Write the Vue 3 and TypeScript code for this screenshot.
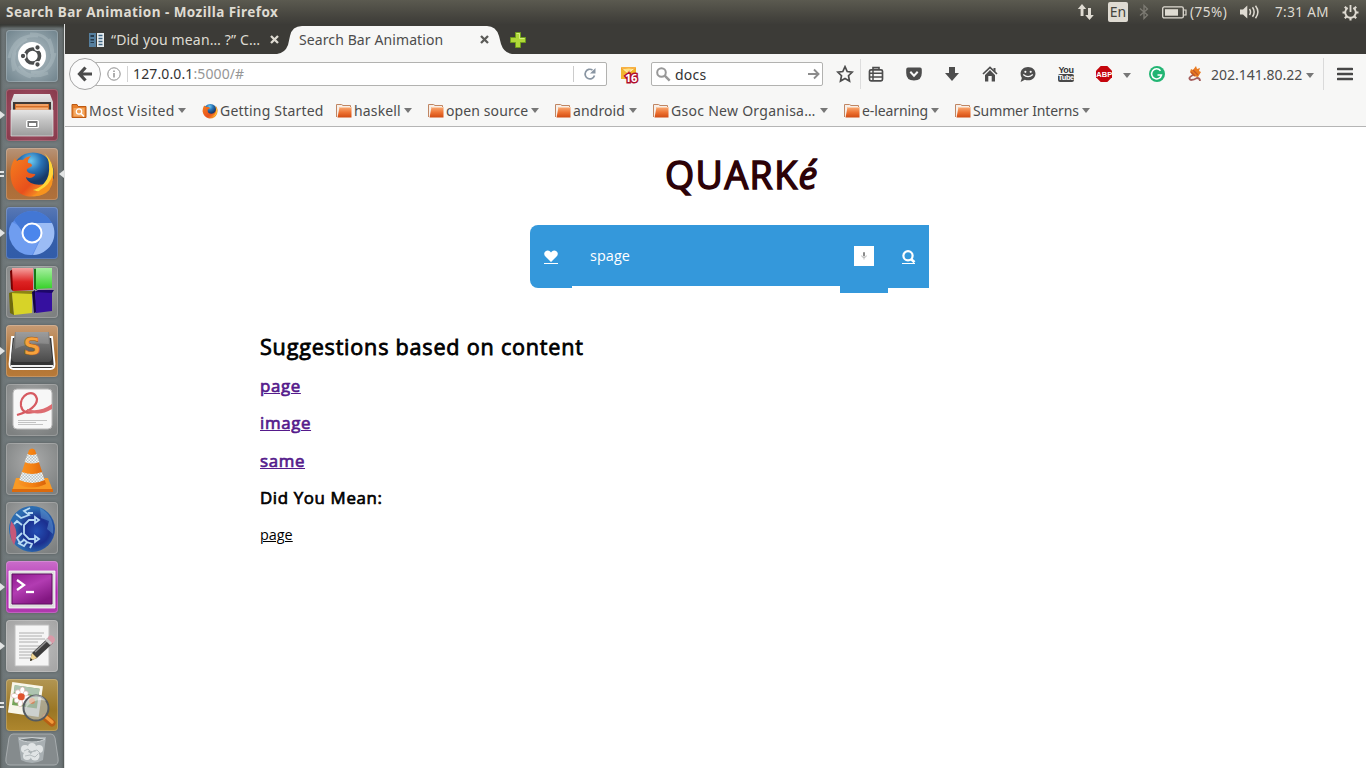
<script setup lang="ts">
interface Bookmark {
  label: string
  icon: 'visited' | 'firefox' | 'folder'
  menu: boolean
  spacing: string
}

const bookmarks: Bookmark[] = [
  { label: 'Most Visited', icon: 'visited', menu: true, spacing: '0.45px' },
  { label: 'Getting Started', icon: 'firefox', menu: false, spacing: '0.2px' },
  { label: 'haskell', icon: 'folder', menu: true, spacing: '0.15px' },
  { label: 'open source', icon: 'folder', menu: true, spacing: '0.1px' },
  { label: 'android', icon: 'folder', menu: true, spacing: '0.1px' },
  { label: 'Gsoc New Organisa…', icon: 'folder', menu: true, spacing: '0.28px' },
  { label: 'e-learning', icon: 'folder', menu: true, spacing: '-0.1px' },
  { label: 'Summer Interns', icon: 'folder', menu: true, spacing: '-0.1px' },
]

const suggestions: string[] = ['page', 'image', 'same']
</script>

<template>
  <div class="screen">
    <header class="panel">
      <span class="panel-title">Search Bar Animation - Mozilla Firefox</span>
      <svg class="net" width="18" height="18" viewBox="0 0 18 18"><path d="M5 1 .8 6H3.600v7h2.900V6H9.200zM12.500 17l4.300-5H14V5h-3v7H8.200z" fill="#dfdbd2" /></svg>
      <span class="lang">En</span>
      <svg class="bt" width="10" height="16" viewBox="0 0 10 16"><path d="M1 4.500 8.500 11 5 14.500V1.500L8.500 5 1 11.500" fill="none" stroke="#7d7b73" stroke-width="1.300" /></svg>
      <svg class="bat" width="25" height="13" viewBox="0 0 25 13"><rect x=".7" y=".9" width="20.600" height="11" rx="1.500" fill="none" stroke="#dfdbd2" stroke-width="1.300" /><rect x="3" y="3.200" width="13" height="6.500" fill="#dfdbd2" /><path d="M22 4h2v5h-2" fill="none" stroke="#dfdbd2" stroke-width="1.200" /></svg>
      <span class="pct">(75%)</span>
      <svg class="vol" width="20" height="16" viewBox="0 0 20 16"><path d="M0 5.500h3l4.300-4v13l-4.300-4H0z" fill="#dfdbd2" /><path d="M9.500 5q2 3 0 6M12.500 3.300q3.300 4.700 0 9.400M15.500 1.800q4.800 6.200 0 12.400" fill="none" stroke="#dfdbd2" stroke-width="1.500" /></svg>
      <span class="clock">7:31 AM</span>
      <svg class="gear" width="17" height="17" viewBox="0 0 17 17"><g stroke="#dfdbd2" fill="none"><path d="M5.700 4A5.300 5.300 0 1 0 11.300 4" stroke-width="1.900" /><path d="M8.500 1v7" stroke-width="1.800" /><path d="M.5 8.500h2.500M14 8.500h2.500M2.800 2.800l2 2M14.200 2.800l-2 2M2.800 14.200l2-2M14.200 14.200l-2-2M8.500 14v2.500" stroke-width="2.100" /></g></svg>
    </header>

    <div class="desktop">
      <aside class="launcher">
        <svg class="defs" width="0" height="0">
          <defs>
            <linearGradient id="metal" x2="0" y2="1"><stop stop-color="#e6e6e6" /><stop offset=".4" stop-color="#c4c4c4" /><stop offset="1" stop-color="#9c9c9c" /></linearGradient>
            <linearGradient id="fire" x2="1" y2="1"><stop stop-color="#f5801e" /><stop offset=".6" stop-color="#e8501c" /><stop offset="1" stop-color="#ffc22c" /></linearGradient>
            <radialGradient id="globe" cx=".45" cy=".2"><stop stop-color="#6ccaf0" /><stop offset=".5" stop-color="#2872b6" /><stop offset="1" stop-color="#173968" /></radialGradient>
            <linearGradient id="redcube" x2="0" y2="1"><stop stop-color="#f5a2a0" /><stop offset=".6" stop-color="#dd2323" /><stop offset="1" stop-color="#cf1010" /></linearGradient>
            <linearGradient id="greencube" x2="0" y2="1"><stop stop-color="#a6efa0" /><stop offset="1" stop-color="#35d128" /></linearGradient>
            <linearGradient id="key" x2="0" y2="1"><stop stop-color="#8a8a8a" /><stop offset="1" stop-color="#4a4a4a" /></linearGradient>
            <linearGradient id="cone" x2="1"><stop stop-color="#f79628" /><stop offset=".5" stop-color="#f58213" /><stop offset="1" stop-color="#d8620a" /></linearGradient>
            <pattern id="check" width="3" height="3" patternUnits="userSpaceOnUse"><rect width="3" height="3" fill="#f4f4f4" /><path d="M0 0h1.500v1.500H0zM1.500 1.500H3V3H1.500z" fill="#b8c4c6" /></pattern>
            <radialGradient id="planet" cx=".6" cy=".55"><stop stop-color="#2450b4" /><stop offset=".55" stop-color="#1b2f8f" /><stop offset="1" stop-color="#2c6cb0" /></radialGradient>
            <linearGradient id="term" x2=".6" y2="1"><stop stop-color="#8f1a8e" /><stop offset=".5" stop-color="#b23cb2" /><stop offset="1" stop-color="#831782" /></linearGradient>
            <linearGradient id="folder" x2="0" y2="1"><stop stop-color="#f8ad78" /><stop offset=".5" stop-color="#ee7434" /><stop offset="1" stop-color="#d24c12" /></linearGradient>
          </defs>
        </svg>
        <div class="tile dash">
          <svg viewBox="0 0 52 52"><g fill="none" stroke="#c3d0d5" stroke-width="3" opacity=".3"><path d="M3 28Q8 4 32 6M8 41Q2 18 21 9M25 47Q3 41 9 22M42 43Q22 51 13 36M49 23Q44 46 25 42M43 9Q52 28 39 40M24 4Q45 3 46 24" /></g><circle cx="26" cy="26" r="14" fill="#fff" /><circle cx="26.500" cy="26" r="7" fill="none" stroke="#4b4d4e" stroke-width="3.600" /><g fill="#4b4d4e" stroke="#fff" stroke-width="1.300"><circle cx="17" cy="26" r="2.800" /><circle cx="31.500" cy="17.500" r="2.800" /><circle cx="31.500" cy="34.500" r="2.800" /></g></svg>
        </div>
        <div class="tile files">
          <i class="pip" />
          <svg viewBox="0 0 52 52"><path d="M8 5h36l3 8v33H5V13z" fill="url(#metal)" /><path d="M7 13h38v8H7z" fill="#3f3936" /><path d="M9 15h34v6H9z" fill="#d66f27" /><path d="M10 15h32v2H10z" fill="#f0a062" /><path d="M10 18.500h32v2H10z" fill="#f5b27a" /><path d="M5 21h42v26H5z" fill="url(#metal)" stroke="#e2e2e2" stroke-width=".7" /><rect x="20" y="31" width="13" height="8" rx="1.500" fill="#fff" /><rect x="21.500" y="32" width="10" height="6" fill="#777" /><rect x="23" y="34" width="7" height="3" fill="#fff" /></svg>
        </div>
        <div class="tile fox">
          <i class="pip twin" /><i class="focus" />
          <svg viewBox="0 0 52 52"><circle cx="27" cy="25.500" r="21" fill="url(#globe)" /><path d="M9 10q-5 8-4.500 17Q5.500 44 20 48q14 2.500 24-7-8 4-16 1 8-1 11-6-8 2-14-1-5-3-5-6 4 2 7 0 3-2 2-3-3 0-6-1-3-2-2-4l5-3q0-3-4-3-1-3 3-7-6 1-8 4-4-1-6 1-2-1-2-3z" fill="url(#fire)" /><path d="M38 5q5 6 5 12 1 11-4 17-4 6-12 8 12 5 19-8 5-17-8-29z" fill="#ffd538" /><path d="M34 42q10-5 13-16 1 13-7 19-8 4-14 3 5-2 8-6z" fill="#f7931e" /></svg>
        </div>
        <div class="tile chromium">
          <i class="pip" />
          <svg viewBox="0 0 52 52"><circle cx="26" cy="26" r="22" fill="#5c8de8" /><path d="M26 26 6 15A22 22 0 0 0 26 48l8-16z" fill="#6f9df0" /><path d="M26 16h20a22 22 0 0 1-19 32l8-17z" fill="#9bbcf5" /><path d="M26 4a22 22 0 0 1 20 12H26q-8 0-10 8L8 13Q15 4 26 4z" fill="#4377d4" /><circle cx="26" cy="26" r="9.500" fill="#4b86ec" stroke="#fff" stroke-width="2" /></svg>
        </div>
        <div class="tile grey">
          <svg viewBox="0 0 52 52"><path d="m4 5 3-2v22l-2-2z" fill="#700" /><path d="M6 2h21v22l-20 1z" fill="url(#redcube)" /><path d="M28 3h3v21l-3-1z" fill="#157a16" /><path d="M30 2h16v20l-16 1z" fill="url(#greencube)" /><path d="m3 27 3-1 2 23-4-2z" fill="#6f6b0c" /><path d="M6 27h20v20L8 49z" fill="#d7d328" /><path d="m4 27 5-2h18l-1 3z" fill="#8c8514" /><path d="m26 26 3-2 2 22-3 1z" fill="#150545" /><path d="M29 26h17v19l-16 2z" fill="#35109f" /><path d="M28 26l4-2h16l-2 3z" fill="#1d0769" /></svg>
        </div>
        <div class="tile sublime">
          <i class="pip" />
          <svg viewBox="0 0 52 52"><path d="M6 12 3.500 39q0 5 4 5h37q4 0 4-5L46 12z" fill="#333" stroke="#fff" stroke-width="1.800" /><path d="M9 7h34l3 25q0 4-3 5H9q-3 0-4-4z" fill="url(#key)" /><path d="M10 7h32l1 12q-20-2-34 5z" fill="#fff" opacity=".16" /><path d="M5 41h42" stroke="#eee" stroke-width="2" /><text x="17" y="30" class="s-mark">S</text></svg>
        </div>
        <div class="tile grey">
          <svg viewBox="0 0 52 52"><rect x="7" y="5" width="39" height="40" rx="4" fill="#f7f7f7" stroke="#b7b7b7" /><path d="M11 31Q31 25 31 15 29 7 21 10q-7 4-6 12 2 9 13 6" fill="none" stroke="#d65a61" stroke-width="2.200" /><path d="M21 25q12 4 25-5v5q-13 8-25 2z" fill="#dd6c71" /><path d="M12 36.500h29M12 38.500h18M12 40.500h25" stroke="#b5b5b5" stroke-width=".8" /></svg>
        </div>
        <div class="tile grey">
          <svg viewBox="0 0 52 52"><path d="M10 35h32l5 13H6z" fill="#f99a24" /><path d="M6 46h41v3H6z" fill="#db6a0d" /><path d="m23 7-11 34q13 7 28 0L29 7q-3-3-6 0z" fill="url(#cone)" /><path d="m21.500 11-3 8q7 3 15 0l-3-8q-5 2-9 0zM16 29l-2.700 8q13 6 25.400 0L36 29q-10 4-20 0z" fill="url(#check)" /></svg>
        </div>
        <div class="tile grey">
          <svg viewBox="0 0 52 52"><circle cx="26" cy="27" r="23" fill="url(#planet)" /><path d="M5 19q9 10 3 24-6-10-3-24z" fill="#c65879" /><path d="M34 6q15 8 13 26l-6-5 2-8-8-3z" fill="#6ba6de" opacity=".45" /><g fill="none" stroke="#b8dbf5" stroke-width="1.800"><path d="M29 18h-6l-5 5v9l5 5h6M24 6l-6 3 5 4-8 3-5-4M27 11h-5M16 23l-5-4-3 3M16 31l-5 5 3 5 4-3M12 41l6 3 3-4 5 2-2 4M21 40l-4-3" /><path d="m29 15 4 3-4 3zM29 34l4 3-4 3z" /></g></svg>
        </div>
        <div class="tile terminal">
          <i class="pip" />
          <svg viewBox="0 0 52 52"><path d="M3 10h46v37H3z" fill="#dedede" stroke="#fff" stroke-width=".8" /><path d="M6 13h40v30H6z" fill="url(#term)" stroke="#5f0e61" /><path d="m11 19 7 5-7 5" fill="none" stroke="#fff" stroke-width="2.300" /><path d="M20 31h8" stroke="#fff" stroke-width="2.300" /></svg>
        </div>
        <div class="tile gedit">
          <i class="pip" />
          <svg viewBox="0 0 52 52"><path d="M9 5h34v41H9z" fill="#f5f5f5" stroke="#bebebe" /><path d="M13 13h25M13 16h23M13 19h26M13 22h19M13 26h22M13 29h24M13 32h17M13 35h19M13 38h15" stroke="#a7a7a7" stroke-width=".9" /><path d="m24 41 2-8L42 18l5 5-16 15z" fill="#3d3d3d" /><path d="m29 32 15-14" stroke="#929292" stroke-width="1.500" /><path d="m24 41 2-8 5 5z" fill="#f0d592" /><path d="m24 41 .7-3 2 2z" fill="#222" /><path d="m40 20 3-4q2-2 5 1 2 3 0 5l-3 3z" fill="#d99aa8" /><path d="m39 20 2-2 5 5-2 2z" fill="#ccc" /></svg>
        </div>
        <div class="tile photo">
          <i class="pip twin" />
          <svg viewBox="0 0 52 52"><g transform="rotate(8 20 20)"><path d="M4 5h31v31H4z" fill="#f8f6ea" /><path d="M7 8h25v20H7z" fill="#75a559" /><path d="M7 8h25v7H7z" fill="#adc4b0" /><g fill="#fff" stroke="#ddb0b0" stroke-width=".6"><ellipse cx="15" cy="13" rx="2.500" ry="4.500" /><ellipse cx="15" cy="24" rx="2.500" ry="4.500" /><ellipse cx="9.500" cy="18.500" rx="4.500" ry="2.500" /><ellipse cx="20.500" cy="18.500" rx="4.500" ry="2.500" /><circle cx="11" cy="14.500" r="2.500" /><circle cx="19" cy="22.500" r="2.500" /><circle cx="19" cy="14.500" r="2.500" /><circle cx="11" cy="22.500" r="2.500" /></g><circle cx="15" cy="18.500" r="3.500" fill="#df542e" /></g><path d="m39 38 7 6" stroke="#b85f14" stroke-width="7" stroke-linecap="round" /><path d="m39 37 7 6" stroke="#f39b3b" stroke-width="3.500" stroke-linecap="round" /><circle cx="30" cy="29" r="12.500" fill="#b3bbbf" fill-opacity=".65" stroke="#555b60" stroke-width="2" /><circle cx="26" cy="22" r="3" fill="#df7c50" opacity=".8" /><path d="M20 29q9-11 20-7-3-6-10-6-10 1-10 13z" fill="#fff" opacity=".45" /></svg>
        </div>
        <svg class="trash" width="54" height="34" viewBox="0 0 54 34"><path d="M8 1h38q3 0 4 4l3 20q1 7-4 7H5q-5 0-4-7L4 5q1-4 4-4z" fill="#858b8d" stroke="#a7acae" /><path d="M13 4h28l-3 23q-11 6-22 0z" fill="#a9b0b3" /><path d="M14 6q13-3 26 0-4 3-13 3T14 6z" fill="#737b7e" stroke="#cdd2d4" /><g fill="#e0e4e5"><circle cx="20" cy="16" r="4" /><circle cx="27" cy="14" r="4" /><circle cx="34" cy="16" r="4" /><circle cx="22" cy="23" r="4" /><circle cx="30" cy="23" r="4.500" /></g><path d="m19 18 4-2 3 3 6-2 3 3m-15 3 5-1 5 2 3-3" fill="none" stroke="#b5bcbe" /></svg>
      </aside>

      <main class="browser">
        <div class="tabs">
          <svg class="favicon" width="16" height="16" viewBox="0 0 16 16"><path d="M0 1h7v14H0z" fill="#567f9e" /><path d="M1.500 3H5v2H1.500zM1.500 7H5v1.500H1.500zM1.500 10H5v1H1.500z" fill="#25394a" /><path d="M8 1h7v14H8z" fill="#e7edf0" /><path d="M9.500 3.500h4M9.500 6.500h4M9.500 9.500h4M9.500 12.500h4" stroke="#3c6482" stroke-width="1.500" /></svg>
          <span class="tab-text">“Did you mean… ?” C…</span>
          <svg class="close" width="9" height="9" viewBox="0 0 9 9"><path d="m1 1 7 7M8 1 1 8" stroke="#dfdbd2" stroke-width="2.300" /></svg>
          <div class="active-tab">
            <svg class="tab-shape" width="238" height="28" viewBox="0 0 238 28"><path d="M0 28q8-1 11-9l2-9Q15 0 25 0h185q9 0 12 10l2 8q3 9 11 10z" fill="#f7f7f6" /></svg>
            <span class="active-text">Search Bar Animation</span>
            <svg class="close dark" width="9" height="9" viewBox="0 0 9 9"><path d="m1 1 7 7M8 1 1 8" stroke="#5b5b58" stroke-width="2.300" /></svg>
          </div>
          <svg class="plus" width="16" height="16" viewBox="0 0 16 16"><path d="M5.500.5h5v5h5v5h-5v5h-5v-5h-5v-5h5z" fill="#b0d838" stroke="#6f9c1c" /><path d="M6.500 1.500h3v5h5" fill="none" stroke="#d5f07d" /></svg>
        </div>

        <div class="nav">
          <div class="back"><svg width="16" height="16" viewBox="0 0 16 16"><path d="M8.500 1.500 2.500 8l6 6.500M2.500 8H15" fill="none" stroke="#4b4b4b" stroke-width="3.200" /></svg></div>
          <div class="url">
            <svg class="info" width="14" height="14" viewBox="0 0 14 14"><circle cx="7" cy="7" r="6.200" fill="none" stroke="#8c8c8c" /><path d="M7 6v4.500M7 3.500v1.400" stroke="#8c8c8c" stroke-width="1.400" /></svg>
            <span class="address">127.0.0.1<b>:5000/#</b></span>
            <span class="reload"><svg width="14" height="14" viewBox="0 0 14 14"><path d="M11.500 8.500A4.800 4.800 0 1 1 9.500 3" fill="none" stroke="#8995a2" stroke-width="1.700" /><path d="M12.500 1v5.500H7z" fill="#8995a2" /></svg></span>
          </div>
          <svg class="cal" width="20" height="20" viewBox="0 0 20 20"><path d="M1 3h15v12H1z" fill="#f1b52d" /><path d="m1 3 7 6 8-6" fill="#ffe183" stroke="#fff3c1" /><path d="M1 3h15v3q-7-3-15 0z" fill="#f49d26" opacity=".7" /><text x="5" y="18" class="cal-num">16</text></svg>
          <div class="search">
            <svg width="15" height="15" viewBox="0 0 15 15"><circle cx="5.500" cy="5.500" r="4.300" fill="none" stroke="#989898" stroke-width="2" /><path d="m8.700 8.700 5 5" stroke="#989898" stroke-width="2.500" /></svg>
            <span>docs</span>
            <svg class="go" width="12" height="12" viewBox="0 0 12 12"><path d="M0 6h10M6 1.500 10.500 6 6 10.500" fill="none" stroke="#8c8c8c" stroke-width="1.900" /></svg>
          </div>
          <div class="cell star"><svg width="18" height="18" viewBox="0 0 18 18"><path d="m9 1.700 2.200 4.800 5 .6-3.700 3.600 1 5.300L9 13.400 4.500 16l1-5.300L1.800 7.100l5-.6z" fill="none" stroke="#4d4d4d" stroke-width="1.700" /></svg></div>
          <div class="cell list"><svg width="16" height="16" viewBox="0 0 16 16"><path d="M5 3.500V1.600h6v1.900" fill="none" stroke="#4d4d4d" stroke-width="1.600" /><rect x="1.500" y="3.800" width="13" height="11" rx="1.500" fill="none" stroke="#4d4d4d" stroke-width="1.700" /><path d="M2 7.200h12M2 11h12M5 4v10" stroke="#4d4d4d" stroke-width="1.500" /></svg></div>
          <div class="cell"><svg width="16" height="16" viewBox="0 0 16 16"><path d="M2 1.500h12q1.800 0 1.800 2V7q0 7.500-7.800 7.500T.2 7V3.500q0-2 1.800-2z" fill="#4d4d4d" /><path d="m4.300 5.700 3.700 4 3.700-4" fill="none" stroke="#f7f7f7" stroke-width="2" /></svg></div>
          <div class="cell"><svg width="16" height="16" viewBox="0 0 16 16"><path d="M5 1h6v6h4l-7 8-7-8h4z" fill="#4d4d4d" /></svg></div>
          <div class="cell"><svg width="16" height="16" viewBox="0 0 16 16"><path d="m1 8 7-6.500L15 8" fill="none" stroke="#4d4d4d" stroke-width="1.700" /><path d="m3 9 5-5 5 5v6.500H9.700V10H6.300v5.500H3zM11.500 2h2v4l-2-2z" fill="#4d4d4d" /></svg></div>
          <div class="cell"><svg class="chat" width="19" height="17" viewBox="0 0 17 16"><path d="M9 1c4 0 7 2.700 7 6.200s-3 6.300-7 6.300q-1.500 0-3-.5L2 15l1.200-3.600Q2 9.500 2 7.200C2 3.700 5 1 9 1z" fill="#4d4d4d" /><circle cx="6.500" cy="5.500" r="1" fill="#f7f7f7" /><circle cx="11.500" cy="5.500" r="1" fill="#f7f7f7" /><path d="M4.500 8q4.500 4 9 0" fill="none" stroke="#f7f7f7" stroke-width="1.200" /></svg></div>
          <div class="cell"><div class="yt"><span>You</span><b>Tube</b></div></div>
          <div class="cell"><svg width="18" height="18" viewBox="0 0 18 18"><path d="M5.700 1h6.600L17 5.700v6.600L12.300 17H5.700L1 12.300V5.700z" fill="#c5060d" /><text x="1.300" y="11.900" class="abp">ABP</text></svg></div>
          <i class="caret abp-caret" />
          <div class="cell grammar"><svg width="18" height="18" viewBox="0 0 18 18"><circle cx="9" cy="9" r="8" fill="#22b573" /><path d="M12.500 5.700A5 5 0 1 0 13.500 10H9.500" fill="none" stroke="#fff" stroke-width="1.500" /></svg></div>
          <div class="cell"><svg width="16" height="18" viewBox="0 0 16 18"><path d="m4 4 2 1 3-4 1 3 3-1-1 3 2 1-3 5-5-1-3-4z" fill="#e97a20" /><path d="m6 5 5 5M4 7l4 4" stroke="#c0562a" stroke-width="1.200" /><path d="M6 10q-6 3-2 5 3 0 6-2 3 0 3 3" fill="none" stroke="#a45d5b" stroke-width="1.800" /></svg></div>
          <span class="ip">202.141.80.22</span>
          <i class="caret ip-caret" />
          <span class="divider" />
          <svg class="burger" width="16" height="14" viewBox="0 0 16 14"><path d="M1 2h14M1 7h14M1 12h14" stroke="#474747" stroke-width="2.600" stroke-linecap="round" /></svg>
        </div>

        <div class="bookmarks">
          <div v-for="b in bookmarks" :key="b.label" class="bookmark" :style="{ letterSpacing: b.spacing }">
            <svg v-if="b.icon === 'visited'" width="16" height="16" viewBox="0 0 16 16"><path d="M1 1.500h5l1 2h8v11H1z" fill="#e8802c" stroke="#bd5a12" /><path d="M2.500 5h11v8.500h-11z" fill="#f3a963" /><circle cx="8" cy="8.500" r="2.700" fill="#f0a055" stroke="#fff" stroke-width="1.200" /><path d="m10 10.500 3 3" stroke="#fff" stroke-width="1.500" /></svg>
            <svg v-else-if="b.icon === 'firefox'" width="16" height="16" viewBox="0 0 52 52"><circle cx="27" cy="25" r="22" fill="url(#globe)" /><path d="M7 8q-6 10-5 20 3 18 21 22 19 2 26-15 4-12-3-25 1 24-15 25-15 0-12-14l7-4q-2-4-7-4-6 1-12-5z" fill="url(#fire)" /><path d="M42 7q8 19-1 31-5 6-11 7 12-1 18-12 4-14-6-26z" fill="#ffc52e" /></svg>
            <svg v-else width="16" height="16" viewBox="0 0 16 16"><path d="M.5 14V1.500h5l1.500 1h7.500v3" fill="#f6efe9" stroke="#c08663" /><path d="M3.500 4h12v10.500H1.500z" fill="url(#folder)" /><path d="M4 4.500h11" stroke="#ffd3b3" stroke-width=".8" /></svg>
            <span class="label">{{ b.label }}</span>
            <i v-if="b.menu" class="caret" />
          </div>
        </div>

        <section class="page">
          <h1>QUARK<em>é</em></h1>
          <div class="bar">
            <a class="heart"><svg width="14" height="14" viewBox="0 0 14 14"><path d="M7 12 1.200 6.300Q-.6 4 .8 2 2.300-.2 5 .8q1.300.6 2 1.700Q7.700 1.400 9 .8q2.700-1 4.200 1.200 1.400 2-.4 4.300z" fill="#fff" /><path d="M0 13.500h14" stroke="#fff" stroke-width="1" /></svg></a>
            <div class="query">spage</div>
            <div class="mic"><span><svg width="6" height="8" viewBox="0 0 6 8"><rect x="2" width="2" height="4.500" rx="1" fill="#8a8a8a" /><path d="M.7 3.500q0 2 2.300 2t2.300-2M3 5.500v2" fill="none" stroke="#aaa" stroke-width=".8" /></svg></span></div>
            <a class="find"><svg width="14" height="14" viewBox="0 0 14 14"><circle cx="6" cy="5.800" r="4.600" fill="none" stroke="#fff" stroke-width="2.200" /><path d="m9 9 3.500 3.300" stroke="#fff" stroke-width="2.600" /><path d="M0 13.500h13" stroke="#fff" stroke-width="1" /></svg></a>
          </div>
          <div class="results">
            <h2>Suggestions based on content</h2>
            <h3 v-for="s in suggestions" :key="s"><a class="visited">{{ s }}</a></h3>
            <h3>Did You Mean:</h3>
            <p><a>page</a></p>
          </div>
        </section>
      </main>
    </div>
  </div>
</template>

<style>
body { margin: 0; overflow: hidden; }
</style>

<style scoped>
.screen { width: 1366px; height: 768px; background: #fff; overflow: hidden; font-family: "Noto Sans", "Open Sans", sans-serif; }
svg { display: block; flex: none; }
.panel { height: 24px; display: flex; align-items: center; background: linear-gradient(#5b5a50, #45443e 70%, #3d3c38); color: #dfdbd2; font-size: 14px; white-space: nowrap; }
.panel-title { width: 1072px; box-sizing: border-box; padding-left: 6px; font-weight: 700; font-size: 13.5px; letter-spacing: .46px; flex: none; }
.net { margin-left: 5px; }
.lang { width: 20px; height: 20px; margin-left: 13px; border-radius: 2px; background: #dfdbd2; color: #45443e; font-size: 14px; line-height: 20px; text-align: center; flex: none; }
.bt { margin-left: 11px; }
.bat { margin-left: 13px; }
.pct { margin-left: 3px; width: 38px; font-size: 13.5px; letter-spacing: .5px; flex: none; }
.vol { margin-left: 12px; }
.clock { margin-left: 15px; width: 55px; font-size: 13.5px; letter-spacing: .4px; flex: none; }
.gear { margin-left: 12px; }

.desktop { display: flex; height: 744px; }
.launcher { width: 65px; flex: none; box-sizing: border-box; padding: 6px 0 0 6px; background: linear-gradient(90deg, #6a7274, #727a7c 12%, #727a7c 88%, #687072); border-right: 1px solid #dedfdf; display: flex; flex-direction: column; gap: 7px; box-shadow: inset 0 3px 3px #373935; overflow: hidden; }
.defs { position: absolute; }
.tile { position: relative; width: 52px; height: 52px; flex: none; border-radius: 4px; box-shadow: inset 0 0 0 1px rgba(255, 255, 255, .2), 0 0 3px rgba(45, 50, 52, .45); }
.tile svg { width: 52px; height: 52px; }
.dash { background: radial-gradient(#b4c2c8, #758891 90%); }
.files { background: radial-gradient(#a6566a, #87394b); }
.fox { background: linear-gradient(#b89478, #a86a38 50%, #b0713b); }
.chromium { background: linear-gradient(#5878b5, #365fa9 50%, #315ca9); }
.grey { background: radial-gradient(circle at 50% 35%, #aaabab, #7e8181 85%); }
.sublime { background: linear-gradient(#c69b75, #ae7130 60%, #b87a39); }
.terminal { background: linear-gradient(#ca6dca, #ad28ae 60%, #b03aaf); }
.gedit { background: radial-gradient(#c2c2c2, #a3a3a3); }
.photo { background: linear-gradient(#b29653, #9a7624 60%, #ae872e); }
.pip { position: absolute; left: -6px; top: 22px; border: solid transparent; border-width: 4px 0 4px 5px; border-left-color: #e3e5e5; }
.pip.twin { top: 23px; width: 4px; height: 2px; border: solid #e3e5e5; border-width: 2px 0; }
.focus { position: absolute; right: -6px; top: 22px; border: solid transparent; border-width: 4px 5px 4px 0; border-right-color: #e3e5e5; }
.s-mark { font: 700 25px "DejaVu Sans", sans-serif; fill: #f7a13c; stroke: #9c5915; stroke-width: .5px; }
.trash { margin: -5px 0 0 -1px; }

.browser { width: 1301px; flex: none; display: flex; flex-direction: column; color: #4c4c4c; }
.tabs { height: 30px; flex: none; display: flex; align-items: center; background: #3c3b37; font-size: 14px; white-space: nowrap; box-sizing: border-box; padding: 2px 0 0 24px; }
.tab-text { width: 152px; margin-left: 6px; margin-top: -2px; color: #dfdbd2; letter-spacing: .17px; flex: none; }
.close { margin-left: 7px; margin-top: -2px; }
.active-tab { position: relative; width: 238px; height: 28px; margin-left: -2px; display: flex; align-items: center; flex: none; }
.tab-shape { position: absolute; left: 0; top: 0; }
.active-text { position: relative; width: 181px; margin-left: 22px; margin-top: -2px; letter-spacing: .1px; flex: none; box-sizing: border-box; }
.close.dark { position: relative; margin-left: 0; }
.plus { margin: 0 0 0 -5px; }

.nav { height: 41px; flex: none; background: #f7f7f6; display: flex; align-items: center; font-size: 14px; white-space: nowrap; box-sizing: border-box; padding-bottom: 1px; }
.back { position: relative; z-index: 1; width: 30px; height: 30px; margin-left: 4px; border: 1px solid #a5a5a5; border-radius: 50%; background: #fbfbfb; display: flex; align-items: center; justify-content: center; flex: none; }
.url { width: 521px; height: 24px; box-sizing: border-box; margin-left: -15px; border: 1px solid #b2b2b0; border-radius: 2px; background: #fff; display: flex; align-items: center; flex: none; }
.info { margin-left: 20px; }
.address { flex: 1; margin-left: 6px; padding-left: 5px; border-left: 1px solid #d3d3d3; line-height: 16px; color: #333; letter-spacing: .12px; }
.address b { font-weight: 400; color: #969696; }
.reload { width: 32px; height: 16px; border-left: 1px solid #ccc; display: flex; align-items: center; justify-content: center; }
.cal { margin-left: 13px; }
.cal-num { font: 700 11px "Open Sans", sans-serif; fill: #fff; stroke: #b00d2c; stroke-width: 3px; paint-order: stroke; letter-spacing: -.3px; }
.search { width: 172px; height: 24px; box-sizing: border-box; margin-left: 11px; padding: 0 3px 0 4px; border: 1px solid #b2b2b0; border-radius: 2px; background: #fff; display: flex; align-items: center; color: #333; flex: none; }
.search span { flex: 1; margin-left: 4px; letter-spacing: .2px; }
.go { margin-right: -1px; }
.cell { width: 38px; display: flex; justify-content: center; flex: none; }
.star { width: 38px; height: 30px; align-items: center; box-sizing: border-box; border-right: 1px solid #ddd; padding-left: 7px; }
.list { width: 30px; margin-right: 4px; }
.yt { display: flex; flex-direction: column; align-items: center; font: 700 9px/8px "Liberation Sans", sans-serif; color: #333; letter-spacing: -.4px; }
.yt b { background: #4a4a4a; color: #fff; border-radius: 2px; width: 16px; text-align: center; font-size: 7.5px; }
.chat { margin-left: -2px; }
.abp { font: 700 7.5px "Liberation Sans", sans-serif; fill: #fff; }
.caret { width: 0; height: 0; border: solid transparent; border-width: 5px 4px 0; border-top-color: #777; flex: none; }
.bookmark .caret { margin-right: 1px; }
.abp-caret { margin-top: 2px; }
.grammar { margin-left: 7px; }
.ip { width: 94px; margin-left: -3px; flex: none; }
.ip-caret { margin: 2px 0 0 1px; }
.divider { width: 1px; height: 32px; margin-left: 9px; background: #dadada; }
.burger { margin-left: 13px; }

.bookmarks { height: 32px; flex: none; box-sizing: border-box; padding-left: 6px; border-bottom: 1px solid #b5b5b5; background: #f7f7f6; display: grid; grid-template-columns: 131px 134px 92px 127px 98px 191px 111px 151px; align-items: center; font-size: 14px; white-space: nowrap; }
.bookmark { display: flex; align-items: center; padding-right: 15px; min-width: 0; height: 31px; }
.label { flex: 1; min-width: 0; margin-left: 2px; line-height: 20px; }

.page { flex: 1; background: #fff; color: #000; font-family: "Open Sans", sans-serif; font-size: 14.4px; }
h1, h2, h3, p { margin: 0; font-weight: 400; }
h1 { margin: 22px 0 0 600px; font-size: 37.5px; line-height: 52px; color: #2d0207; -webkit-text-stroke: 1.5px #2d0207; letter-spacing: 1.45px; }
.bar { display: flex; align-items: flex-start; margin: 24px 0 0 465px; color: #fff; }
.bar > * { background: #3498db; display: flex; align-items: center; box-sizing: border-box; flex: none; }
.heart { width: 42px; height: 63px; border-radius: 8px 0 0 8px; justify-content: center; }
.query { width: 268px; height: 61px; padding-left: 18px; letter-spacing: .1px; }
.mic { width: 48px; height: 68px; justify-content: center; padding-bottom: 6px; }
.mic span { width: 20px; height: 20px; background: #fff; display: flex; align-items: center; justify-content: center; }
.find { width: 41px; height: 63px; justify-content: center; }
.results { margin: 32px 0 0 195px; }
h2 { font-size: 21.6px; line-height: 44px; margin-bottom: -2px; -webkit-text-stroke: .8px #000; letter-spacing: .78px; }
h3 { font-size: 16.85px; line-height: 37.3px; -webkit-text-stroke: .7px currentColor; letter-spacing: .65px; }
p { line-height: 37px; }
a { text-decoration: underline; text-decoration-thickness: 1px; }
.visited { color: #551a8b; }
</style>
